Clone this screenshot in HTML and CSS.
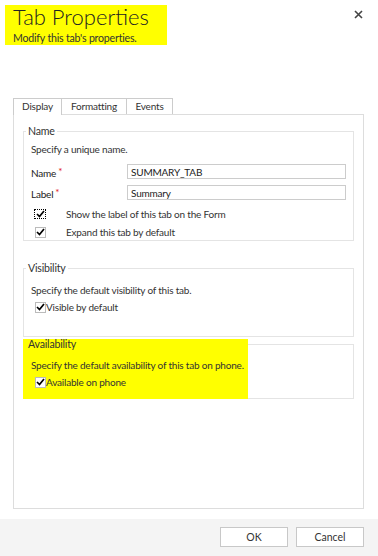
FILE: index.html
```html
<!DOCTYPE html>
<html lang="en">
<head>
    <meta charset="UTF-8">
    <meta name="viewport" content="width=device-width, initial-scale=1.0">
    <title>Tab Properties</title>
    <link rel="stylesheet" href="styles.css">
</head>
<body>
    <div class="dialog">
        <header class="dialog-header">
            <div class="title-block">
                <h1>Tab Properties</h1>
                <p>Modify this tab's properties.</p>
            </div>
            <button class="close-button" title="Close">
                <svg width="9" height="9" viewBox="0 0 9 9"><path d="M1 1L8 8M8 1L1 8" stroke="#444" stroke-width="1.6" fill="none"/></svg>
            </button>
        </header>

        <div class="tabs">
            <div class="tab-strip">
                <span class="tab active">Display</span>
                <span class="tab">Formatting</span>
                <span class="tab">Events</span>
            </div>

            <div class="tab-panel">
                <fieldset class="group group-name">
                    <legend>Name</legend>
                    <p class="hint">Specify a unique name.</p>
                    <div class="field-row">
                        <label>Name<span class="required">*</span></label>
                        <input type="text" value="SUMMARY_TAB">
                    </div>
                    <div class="field-row">
                        <label>Label<span class="required">*</span></label>
                        <input type="text" value="Summary">
                    </div>
                    <div class="check-row wide first">
                        <span class="box focused">
                            <svg width="9" height="8" viewBox="0 0 9 8"><path d="M1 4L3.5 6.5L8 1" stroke="#000" stroke-width="1.7" fill="none"/></svg>
                        </span>
                        Show the label of this tab on the Form
                    </div>
                    <div class="check-row wide">
                        <span class="box">
                            <svg width="9" height="8" viewBox="0 0 9 8"><path d="M1 4L3.5 6.5L8 1" stroke="#000" stroke-width="1.7" fill="none"/></svg>
                        </span>
                        Expand this tab by default
                    </div>
                </fieldset>

                <fieldset class="group group-visibility">
                    <legend>Visibility</legend>
                    <p class="hint">Specify the default visibility of this tab.</p>
                    <div class="check-row">
                        <span class="box">
                            <svg width="9" height="8" viewBox="0 0 9 8"><path d="M1 4L3.5 6.5L8 1" stroke="#000" stroke-width="1.7" fill="none"/></svg>
                        </span>
                        Visible by default
                    </div>
                </fieldset>

                <fieldset class="group group-availability">
                    <div class="highlight"></div>
                    <legend>Availability</legend>
                    <p class="hint">Specify the default availability of this tab on phone.</p>
                    <div class="check-row">
                        <span class="box">
                            <svg width="9" height="8" viewBox="0 0 9 8"><path d="M1 4L3.5 6.5L8 1" stroke="#000" stroke-width="1.7" fill="none"/></svg>
                        </span>
                        Available on phone
                    </div>
                </fieldset>
            </div>
        </div>

        <footer class="dialog-footer">
            <button class="footer-button">OK</button>
            <button class="footer-button">Cancel</button>
        </footer>
    </div>
</body>
</html>
```

FILE: styles.css
```css
* {
    box-sizing: border-box;
}
body {
    margin: 0;
    background-color: white;
    font-family: 'Segoe UI', Lato, 'Open Sans', sans-serif;
    font-size: 10px;
    letter-spacing: -0.2px;
    color: #333;
}
.dialog {
    display: flex;
    flex-direction: column;
    height: 556px;
}
.dialog-header {
    display: flex;
    justify-content: space-between;
    align-items: flex-start;
    padding: 5px 14px 0 5px;
    height: 98px;
}
.title-block {
    background-color: #ffff00;
    width: 162px;
    height: 40px;
    padding: 0 0 0 8px;
}
.title-block h1 {
    margin: 0;
    font-weight: 300;
    font-size: 22px;
    line-height: 24px;
    letter-spacing: 0;
    color: #222;
}
.title-block p {
    margin: 2px 0 0;
    font-size: 10.6px;
    line-height: 14px;
    color: #333;
}
.close-button {
    background: none;
    border: none;
    padding: 0;
    margin: 5px 1px 0 0;
    width: 9px;
    height: 9px;
    cursor: pointer;
}
.close-button svg {
    display: block;
}
.tabs {
    flex-grow: 1;
    display: flex;
    flex-direction: column;
    padding: 0 14px 0 13px;
}
.tab-strip {
    display: flex;
    height: 16px;
}
.tab {
    border: 1px solid #ccc;
    border-bottom: none;
    margin-right: -1px;
    line-height: 15px;
    text-align: center;
    background-color: white;
}
.tab:nth-child(1) {
    width: 49px;
}
.tab:nth-child(2) {
    width: 66px;
}
.tab:nth-child(3) {
    width: 47px;
}
.tab.active {
    position: relative;
    z-index: 1;
    height: 17px;
}
.tab-panel {
    flex-grow: 1;
    border: 1px solid #ddd;
    padding: 9px 9px 0 9px;
}
.group {
    position: relative;
    margin: 0;
    border: 1px solid #e4e4e4;
    padding: 0 7px 1px 7px;
}
.group legend {
    position: relative;
    z-index: 1;
    margin-left: -5px;
    padding: 0 2px;
    line-height: 14px;
    font-size: 10.6px;
    color: #333;
}
.group-visibility {
    margin-top: 20px;
    padding-bottom: 22px;
}
.group-availability {
    margin-top: 0;
    padding-bottom: 9px;
}
.highlight {
    position: absolute;
    left: -1px;
    top: -12px;
    bottom: -1px;
    width: 225px;
    background-color: #ffff00;
}
.hint {
    position: relative;
    margin: 4px 0 0;
    line-height: 14px;
}
.group-visibility .hint {
    margin-top: 8px;
}
.group-availability .hint {
    margin-top: 7px;
}
.field-row {
    display: flex;
    align-items: center;
    margin-top: 6px;
    height: 15px;
}
.field-row:first-of-type {
    margin-top: 8px;
}
.field-row label {
    width: 96px;
    padding-top: 3px;
    color: #222;
}
.required {
    color: #e02020;
    margin-left: 2px;
    position: relative;
    top: -2px;
}
.field-row input {
    flex-grow: 1;
    height: 15px;
    border: 1px solid #ccc;
    padding: 0 3px;
    font-family: inherit;
    font-size: 10px;
    letter-spacing: -0.2px;
    color: #222;
    outline: none;
}
.check-row {
    position: relative;
    display: flex;
    align-items: center;
    height: 14px;
    margin-top: 3px;
    padding-left: 4px;
    color: #333;
}
.check-row.wide {
    margin-top: 4px;
}
.check-row.first {
    margin-top: 7px;
}
.box {
    display: flex;
    align-items: center;
    justify-content: center;
    width: 11px;
    height: 11px;
    border: 1px solid #bbb;
    background-color: white;
}
.check-row.wide .box {
    margin-right: 20px;
}
.box.focused {
    border: 1px dotted #000;
    width: 12px;
    height: 10px;
    margin-left: -1px;
    margin-right: 20px;
}
.dialog-footer {
    display: flex;
    justify-content: flex-end;
    gap: 8px;
    height: 37px;
    margin-top: 10px;
    padding: 8px 14px 0 0;
    background-color: #f4f4f4;
}
.footer-button {
    width: 68px;
    height: 20px;
    border: 1px solid #c8c8c8;
    background-color: white;
    font-family: inherit;
    font-size: 10.5px;
    color: #333;
    cursor: pointer;
}
```
